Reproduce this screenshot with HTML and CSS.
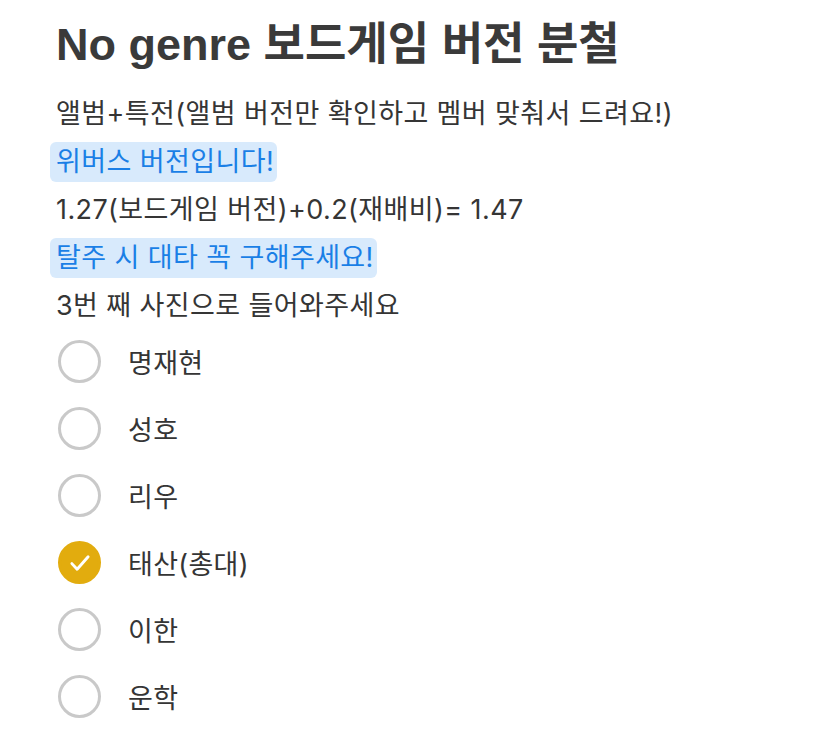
FILE: index.html
```html
<!DOCTYPE html>
<html lang="ko">
<head>
<meta charset="utf-8">
<link rel="stylesheet" href="styles.css">
</head>
<body>
<main class="page">
  <h1 class="title">No genre 보드게임 버전 분철</h1>
  <div class="desc">
    <p class="line">앨범+특전(앨범 버전만 확인하고 멤버 맞춰서 드려요!)</p>
    <p class="line"><span class="mark">위버스 버전입니다!</span></p>
    <p class="line">1.27(보드게임 버전)+0.2(재배비)= 1.47</p>
    <p class="line"><span class="mark">탈주 시 대타 꼭 구해주세요!</span></p>
    <p class="line">3번 째 사진으로 들어와주세요</p>
  </div>
  <ul class="options">
    <li class="option"><span class="radio"></span><span class="label">명재현</span></li>
    <li class="option"><span class="radio"></span><span class="label">성호</span></li>
    <li class="option"><span class="radio"></span><span class="label">리우</span></li>
    <li class="option"><span class="radio checked"><svg viewBox="0 0 24 24" width="30" height="30"><path d="M5.5 12.5l4.2 4.5L18.5 7" fill="none" stroke="#fff" stroke-width="2.3" stroke-linecap="round" stroke-linejoin="round"/></svg></span><span class="label">태산(총대)</span></li>
    <li class="option"><span class="radio"></span><span class="label">이한</span></li>
    <li class="option"><span class="radio"></span><span class="label">운학</span></li>
  </ul>
</main>
</body>
</html>
```

FILE: styles.css
```css
html, body {
  margin: 0;
  padding: 0;
  background: #ffffff;
}
body {
  font-family: "Inter", "Noto Sans CJK KR", sans-serif;
  color: #353535;
}
.page {
  padding: 13px 0 0 56px;
}
.title {
  margin: 0;
  font-family: "Liberation Sans", "Noto Sans CJK KR", sans-serif;
  font-size: 45px;
  font-weight: 700;
  line-height: 64px;
  color: #3a3a3a;
  letter-spacing: 0;
}
.desc {
  margin-top: 13px;
}
.line {
  margin: 0;
  font-size: 27px;
  line-height: 48px;
  height: 48px;
  letter-spacing: 0.4px;
}
.mark {
  background: #d8eafc;
  color: #1a7fe6;
  border-radius: 6px;
  padding: 3px 3px 4px 6px;
  margin-left: -6px;
}
.options {
  list-style: none;
  margin: -2px 0 0 0;
  padding: 0;
}
.option {
  display: flex;
  align-items: center;
  height: 67px;
  margin-left: 2px;
}
.radio {
  box-sizing: border-box;
  width: 43px;
  height: 43px;
  border-radius: 50%;
  border: 3px solid #c9c9c9;
  display: flex;
  align-items: center;
  justify-content: center;
}
.radio.checked {
  background: #e2ac0e;
  border-color: #e2ac0e;
}
.label {
  margin-left: 27px;
  font-size: 27px;
  letter-spacing: 0.3px;
  color: #353535;
}
```
